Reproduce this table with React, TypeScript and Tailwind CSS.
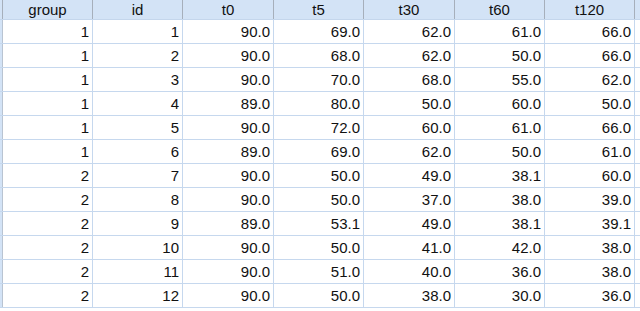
import React from 'react';

const columns = ['group', 'id', 't0', 't5', 't30', 't60', 't120'];
const widths = ['w-[90px]', 'w-[90px]', 'w-[91px]', 'w-[90px]', 'w-[91px]', 'w-[90px]', 'w-[90px]'];

const rows: string[][] = [
  ['1', '1', '90.0', '69.0', '62.0', '61.0', '66.0'],
  ['1', '2', '90.0', '68.0', '62.0', '50.0', '66.0'],
  ['1', '3', '90.0', '70.0', '68.0', '55.0', '62.0'],
  ['1', '4', '89.0', '80.0', '50.0', '60.0', '50.0'],
  ['1', '5', '90.0', '72.0', '60.0', '61.0', '66.0'],
  ['1', '6', '89.0', '69.0', '62.0', '50.0', '61.0'],
  ['2', '7', '90.0', '50.0', '49.0', '38.1', '60.0'],
  ['2', '8', '90.0', '50.0', '37.0', '38.0', '39.0'],
  ['2', '9', '89.0', '53.1', '49.0', '38.1', '39.1'],
  ['2', '10', '90.0', '50.0', '41.0', '42.0', '38.0'],
  ['2', '11', '90.0', '51.0', '40.0', '36.0', '38.0'],
  ['2', '12', '90.0', '50.0', '38.0', '30.0', '36.0'],
];

const App: React.FC = () => {
  return (
    <div className="w-[640px] h-[311px] overflow-hidden bg-white font-['Liberation_Sans',Arial,sans-serif] text-[15px] text-[#111]">
      {/* header */}
      <div className="flex h-[20px] bg-[#d3e3f6] border-b border-[#c4d6ec]">
        <div className="w-[3px] shrink-0 border-r border-[#a6afbb] bg-[#d3e3f6]" />
        {columns.map((c, i) => (
          <div
            key={c}
            className={`${widths[i]} shrink-0 flex items-center justify-center border-r border-[#a6afbb] leading-none`}
          >
            {c}
          </div>
        ))}
        <div className="flex-1" />
      </div>

      {/* body */}
      {rows.map((r, ri) => (
        <div key={ri} className="flex h-[24px] border-b border-[#c6d8ee]">
          <div className="w-[3px] shrink-0 border-r border-[#b9c4d2] bg-[#d3e3f6]" />
          {r.map((v, ci) => (
            <div
              key={ci}
              className={`${widths[ci]} shrink-0 flex items-center justify-end pr-[3px] border-r border-[#c6d8ee] leading-none`}
            >
              {v}
            </div>
          ))}
          <div className="flex-1" />
        </div>
      ))}
    </div>
  );
};

export default App;
